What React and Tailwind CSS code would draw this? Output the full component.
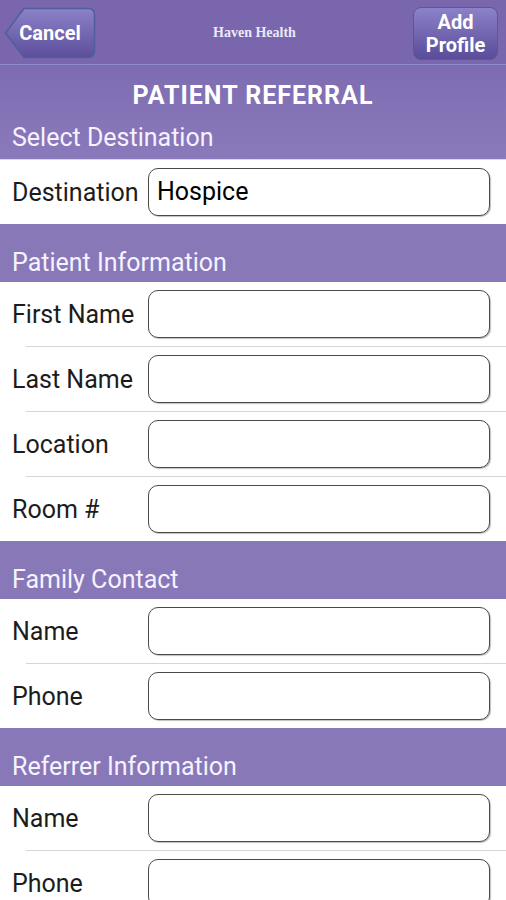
import React from 'react'

const font = { fontFamily: 'Roboto, "Liberation Sans", sans-serif' }

const SectionHeader = ({ title }) => (
    <div className="h-[58px] bg-[#8878b8] flex items-end px-3 pb-[5px]">
        <span className="text-[25px] leading-[28px] text-[#f6f2ff]">{title}</span>
    </div>
)

const Row = ({ label, value, last }) => (
    <div>
        <div className="h-[64px] flex items-center bg-white">
            <span className="w-[148px] pl-3 pt-[2px] text-[25px] leading-[28px] text-[#1c1c1c] whitespace-nowrap">{label}</span>
            <div className="w-[342px] h-[48px] rounded-[10px] border-[1.5px] border-[#4a4a4a] shadow-[1px_1px_1px_rgba(0,0,0,0.25)] bg-white flex items-center px-2">
                <span className="text-[25px] leading-[28px] text-black">{value}</span>
            </div>
        </div>
        {!last && <div className="h-px bg-[#d6d6d6] ml-[26px]" />}
    </div>
)

const CancelButton = () => (
    <button className="relative w-[92px] h-[52px] ml-[4px] mt-[7px]">
        <svg className="absolute inset-0" width="92" height="52" viewBox="0 0 92 52">
            <defs>
                <linearGradient id="cg" x1="0" y1="0" x2="0" y2="1">
                    <stop offset="0" stopColor="#8c82c9" />
                    <stop offset="1" stopColor="#5c4e9b" />
                </linearGradient>
            </defs>
            <path d="M20 1.5 H84 Q90.5 1.5 90.5 8 V44 Q90.5 50.5 84 50.5 H20 L1.5 26 Z" fill="url(#cg)" stroke="#4e609b" strokeWidth="1.5" />
        </svg>
        <span className="relative block text-[20px] leading-[24px] font-bold text-white">Cancel</span>
    </button>
)

export default function App() {
    return (
        <div className="w-[506px] h-[900px] overflow-hidden bg-white" style={font}>
            {/* top bar */}
            <div className="h-[65px] bg-[#7966ac] border-b border-[#8e8ad0] flex items-start justify-between">
                <CancelButton />
                <span className="mt-[25px] text-[14px] leading-[16px] font-bold text-[#ece8f8]" style={{ fontFamily: '"Liberation Serif", serif' }}>
                    Haven Health
                </span>
                <button className="mt-[7px] mr-[8px] w-[85px] h-[53px] rounded-[8px] border-[1.5px] border-[#4f5e98] bg-gradient-to-b from-[#8c82c9] to-[#5a4c98] flex flex-col items-center justify-center text-white font-bold text-[20px] leading-[23px]">
                    <span>Add</span>
                    <span>Profile</span>
                </button>
            </div>

            {/* title band */}
            <div className="h-[94px] bg-gradient-to-b from-[#7e6cb1] to-[#8a7abb] flex flex-col px-3">
                <div className="mt-[17px] text-center text-[25px] leading-[28px] font-bold tracking-[1px] text-white">PATIENT REFERRAL</div>
                <div className="mt-[14px] text-[25px] leading-[28px] text-[#f6f2ff]">Select Destination</div>
            </div>
            <div className="h-px bg-[#ddd6ee]" />
            <Row label="Destination" value="Hospice" last />

            <SectionHeader title="Patient Information" />
            <Row label="First Name" />
            <Row label="Last Name" />
            <Row label="Location" />
            <Row label="Room #" last />

            <SectionHeader title="Family Contact" />
            <Row label="Name" />
            <Row label="Phone" last />

            <SectionHeader title="Referrer Information" />
            <Row label="Name" />
            <Row label="Phone" last />
        </div>
    )
}
